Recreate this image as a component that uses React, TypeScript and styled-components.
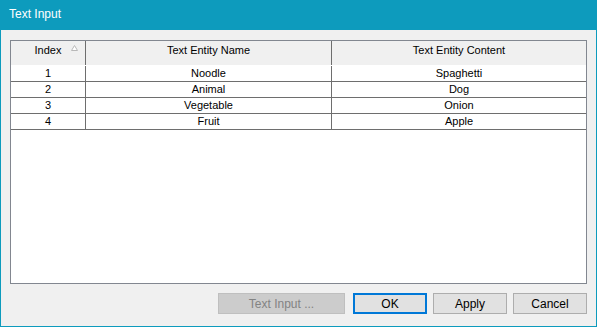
import styled, { createGlobalStyle } from 'styled-components'

const rows = [
  {index: 1, name: 'Noodle', content: 'Spaghetti'},
  {index: 2, name: 'Animal', content: 'Dog'},
  {index: 3, name: 'Vegetable', content: 'Onion'},
  {index: 4, name: 'Fruit', content: 'Apple'}
]

const cols = '75px 246px 1fr'

export default function App() {
  return (
    <>
      <Global />
      <Window>
        <TitleBar>Text Input</TitleBar>
        <Body>
          <ListView>
            <Header>
              <HeadCell>
                Index
                <SortArrow width="7" height="6" viewBox="0 0 7 6">
                  <path d="M3.5 0.5 L6.5 5.5 L0.5 5.5 Z" fill="#fff" stroke="#b8b8b8" strokeWidth="1" />
                </SortArrow>
              </HeadCell>
              <HeadCell>Text Entity Name</HeadCell>
              <HeadCell $last>Text Entity Content</HeadCell>
            </Header>
            {rows.map(r =>
              <Row key={r.index}>
                <Cell>{r.index}</Cell>
                <Cell>{r.name}</Cell>
                <Cell $last>{r.content}</Cell>
              </Row>
            )}
          </ListView>
          <Buttons>
            <Button $wide disabled>Text Input ...</Button>
            <Button $default>OK</Button>
            <Button>Apply</Button>
            <Button>Cancel</Button>
          </Buttons>
        </Body>
      </Window>
    </>
  )
}

const Global = createGlobalStyle`
  html, body {
    margin: 0;
    padding: 0;
    background: #f0f0f0;
  }
  body {
    font-family: "Liberation Sans", Arial, sans-serif;
    font-size: 12px;
  }
`

const Window = styled.div`
  width: 597px;
  height: 327px;
  box-sizing: border-box;
  border: 1px solid #0d9bbd;
  border-top: none;
  display: flex;
  flex-direction: column;
  background: #f0f0f0;
`

const TitleBar = styled.div`
  height: 30px;
  margin: 0 -1px;
  padding-left: 9px;
  background: #0d9bbd;
  color: #fff;
  font-size: 12px;
  line-height: 29px;
  flex-shrink: 0;
`

const Body = styled.div`
  flex: 1;
  display: flex;
  flex-direction: column;
  padding: 10px 9px 0 9px;
`

const ListView = styled.div`
  height: 244px;
  box-sizing: border-box;
  border: 1px solid #828790;
  background: #fff;
  color: #000;
`

const Header = styled.div`
  display: grid;
  grid-template-columns: ${cols};
  height: 24px;
  background: #f0f0f0;
  margin-bottom: 1px;
`

const HeadCell = styled.div<{ $last?: boolean }>`
  position: relative;
  text-align: center;
  padding-top: 3px;
  font-size: 11px;
  border-right: ${p => p.$last ? 'none' : '1px solid #6e6e6e'};
`

const SortArrow = styled.svg`
  position: absolute;
  top: 4px;
  right: 7px;
`

const Row = styled.div`
  display: grid;
  grid-template-columns: ${cols};
  height: 16px;
  box-sizing: border-box;
  border-bottom: 1px solid #6e6e6e;
`

const Cell = styled.div<{ $last?: boolean }>`
  text-align: center;
  font-size: 11px;
  line-height: 15px;
  border-right: ${p => p.$last ? 'none' : '1px solid #6e6e6e'};
`

const Buttons = styled.div`
  display: flex;
  justify-content: flex-end;
  gap: 6px;
  margin-top: 9px;
`

const Button = styled.button<{ $wide?: boolean, $default?: boolean }>`
  width: ${p => p.$wide ? '127px' : '74px'};
  height: 21px;
  box-sizing: border-box;
  padding: 0;
  margin-right: ${p => p.$wide ? '2px' : '0'};
  font-family: "Liberation Sans", Arial, sans-serif;
  font-size: 12px;
  color: #000;
  background: #e1e1e1;
  border: ${p => p.$default ? '2px solid #0078d7' : '1px solid #adadad'};
  border-radius: 0;

  &:disabled {
    background: #cccccc;
    border-color: #bfbfbf;
    color: #838383;
  }
`
